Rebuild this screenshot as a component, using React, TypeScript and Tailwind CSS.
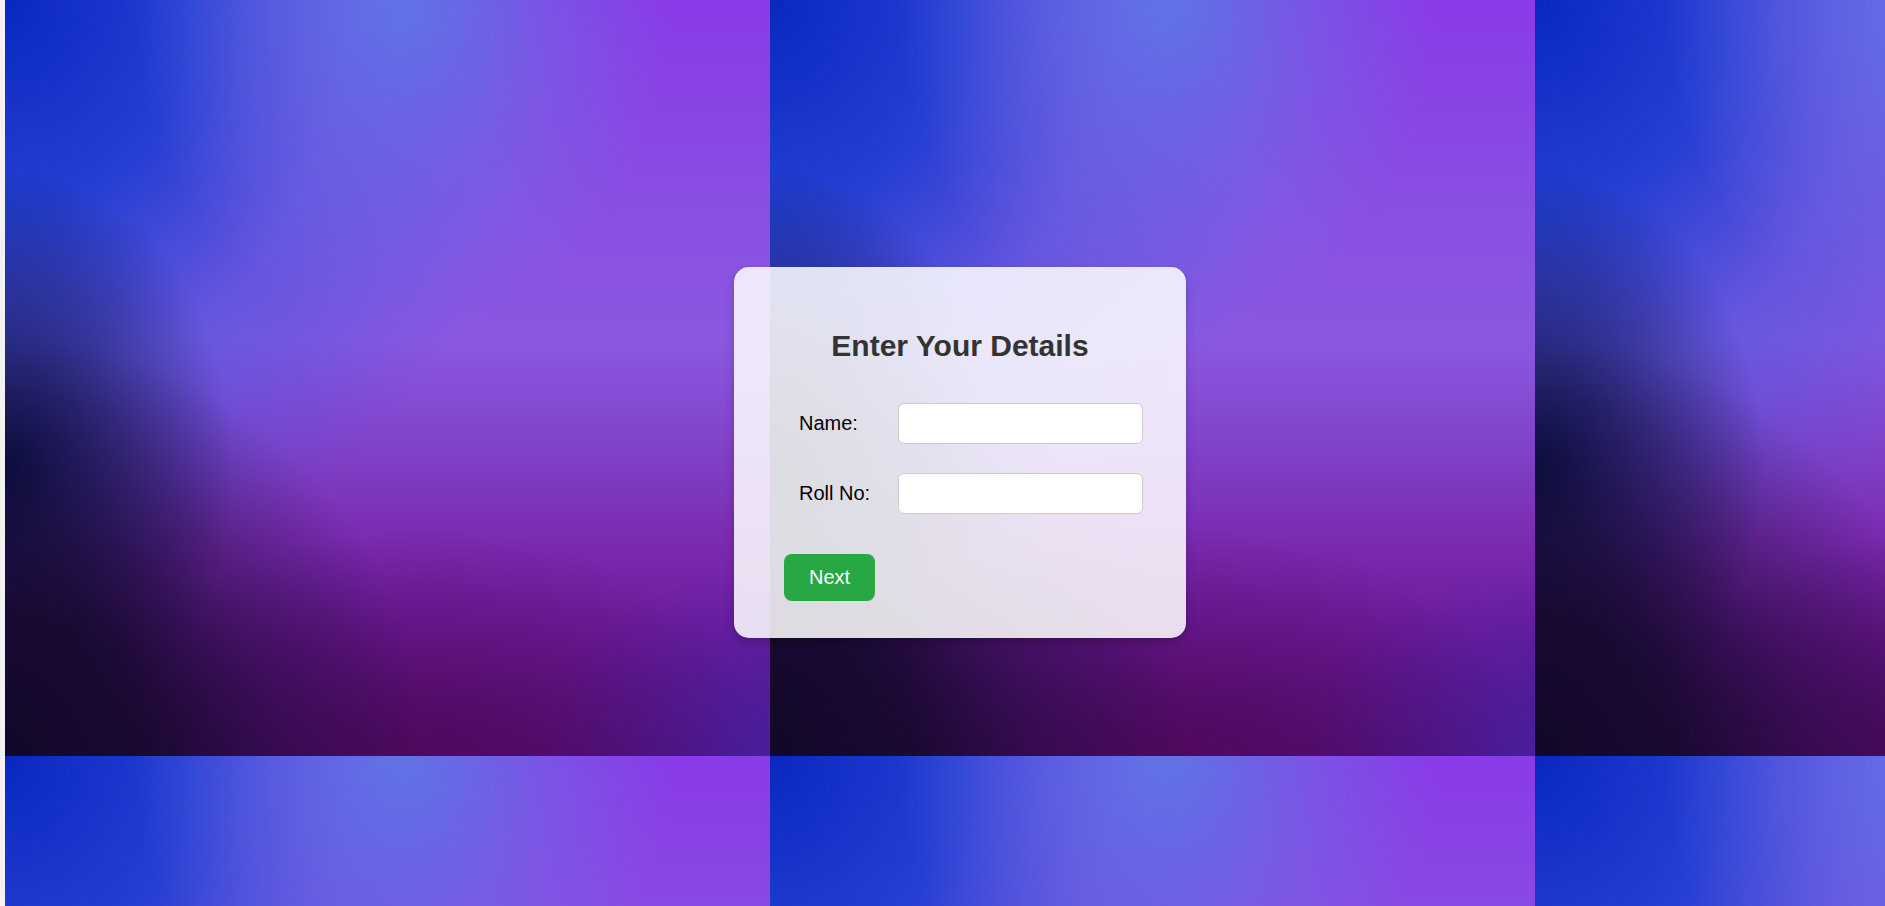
import { useState } from "react";

// one tile of the backdrop, repeated over the page
const TILE_BG =
  "[background-image:radial-gradient(ellipse_55%_55%_at_0%_100%,#120828_0%,rgba(18,8,40,0.85)_35%,rgba(18,8,40,0.4)_65%,rgba(18,8,40,0)_100%),radial-gradient(ellipse_30%_40%_at_0%_62%,rgba(10,16,70,1)_0%,rgba(10,16,70,0.6)_40%,rgba(10,16,70,0)_100%),radial-gradient(ellipse_45%_30%_at_55%_100%,rgba(80,8,90,0.9)_0%,rgba(80,8,90,0.4)_50%,rgba(80,8,90,0)_100%),radial-gradient(ellipse_30%_25%_at_100%_100%,rgba(70,34,168,0.8)_0%,rgba(70,34,168,0)_100%),radial-gradient(ellipse_35%_45%_at_52%_0%,rgba(96,118,230,0.95)_0%,rgba(106,112,228,0.5)_50%,rgba(106,112,228,0)_100%),radial-gradient(ellipse_70%_80%_at_0%_0%,#0a28c0_0%,rgba(22,62,208,0.88)_35%,rgba(48,88,220,0.4)_65%,rgba(48,88,220,0)_100%),linear-gradient(to_bottom,#8a3ae8_0%,#8a50e2_30%,#8a58e0_45%,#8040c8_60%,#7a2ab0_72%,#6a1a98_85%,#50107a_100%)]";

export default function App() {
  const [name, setName] = useState("");
  const [roll, setRoll] = useState("");

  return (
    <div className="h-screen w-full bg-[#f2f2f2] pl-[5px] font-['Liberation_Sans',Arial,sans-serif]">
      <div
        className={`h-full w-full ${TILE_BG} [background-size:765px_756px] bg-repeat flex items-center justify-center pl-[30px] pb-[2px]`}
      >
        <div className="w-[452px] h-[371px] rounded-[15px] bg-[rgba(255,255,255,0.86)] shadow-[0_5px_10px_rgba(0,0,0,0.2)] pt-[62px]">
          <h2 className="text-center text-[30px] leading-[34px] font-bold text-[#333]">
            Enter Your Details
          </h2>
          <div className="mt-[40px] pl-[65px] flex flex-col gap-[29px]">
            <div className="flex items-center">
              <label className="w-[99px] text-[20px] text-black">Name:</label>
              <input
                value={name}
                onChange={(e) => setName(e.target.value)}
                className="w-[245px] h-[41px] rounded-[6px] border border-[#ccc] bg-white px-2 text-[18px] outline-none"
              />
            </div>
            <div className="flex items-center">
              <label className="w-[99px] text-[20px] text-black">Roll No:</label>
              <input
                value={roll}
                onChange={(e) => setRoll(e.target.value)}
                className="w-[245px] h-[41px] rounded-[6px] border border-[#ccc] bg-white px-2 text-[18px] outline-none"
              />
            </div>
          </div>
          <button className="mt-[40px] ml-[50px] w-[91px] h-[47px] rounded-[8px] bg-[#28a745] text-white text-[20px]">
            Next
          </button>
        </div>
      </div>
    </div>
  );
}
